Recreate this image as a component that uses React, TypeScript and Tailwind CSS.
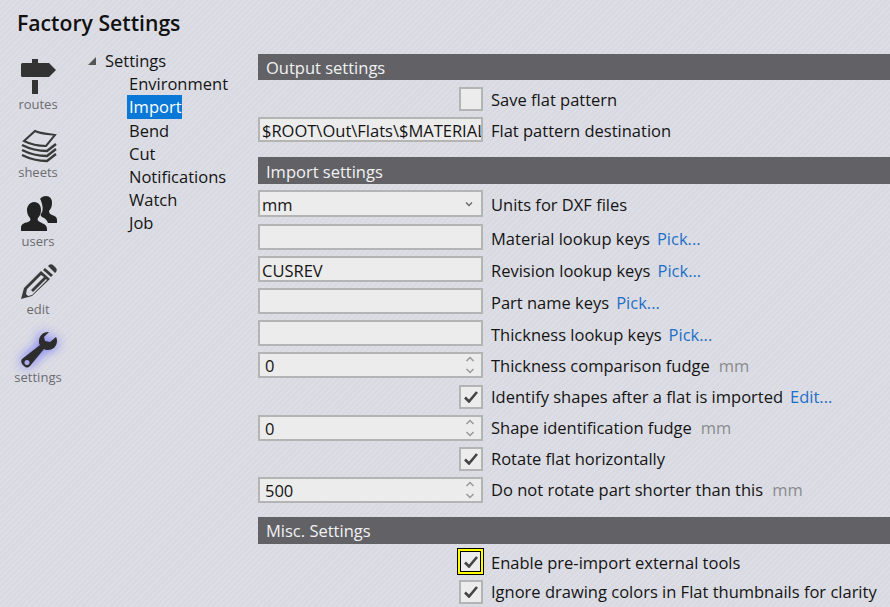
import React from "react";

const font = "font-['Open_Sans','Noto_Sans',sans-serif]";

function Signpost() {
  return (
    <svg width="36" height="36" viewBox="0 0 36 36" fill="#333333">
      <path d="M11 0h6v4h11l7 7-7 7H1.5A1.5 1.5 0 0 1 0 16.5v-11A1.5 1.5 0 0 1 1.5 4H11z" />
      <rect x="11" y="21" width="6" height="14" />
    </svg>
  );
}

function Sheets() {
  return (
    <svg width="36" height="36" viewBox="0 0 36 36" fill="none" stroke="#3a3a3a">
      <path d="M3 14 14 4c6 3 14 3 20 4l-9 11C17 19 9 17 3 14z" strokeWidth="2" fill="#dcdde4" />
      <path d="M1 18c8 4 17 6 25 6l9-7" strokeWidth="2.4" />
      <path d="M1 23c8 4 17 6 25 6l9-7" strokeWidth="2.4" />
      <path d="M1 28c8 4 17 6 25 6l9-7" strokeWidth="2.4" />
    </svg>
  );
}

function Users() {
  return (
    <svg width="36" height="36" viewBox="0 0 36 36" fill="#222222">
      <path d="M25 0c4 0 6 3 6 7 0 3-1 6-3 8 0 2 1 3 3 4 3 1 5 2 5 5v3H27c-1-3-3-5-6-6-1-1-2-2-1-3 2-3 2-6 1-10-1-3-1-4-2-5 1-2 4-3 6-3z" />
      <path d="M13 6c5 0 7 4 7 8 0 3-1 6-3 8-1 2 0 3 2 4 4 2 7 3 7 7v2H0v-3c0-4 3-5 7-6 2-1 3-2 2-4-2-2-3-5-3-8 0-4 3-8 7-8z" />
    </svg>
  );
}

function Pencil() {
  return (
    <svg width="36" height="36" viewBox="0 0 36 36" fill="#3a3a3a">
      <path d="M28 1c1-1 3-1 4 0l3 3c1 1 1 3 0 4l-1 1-7-7z" />
      <path d="M24 4l8 7-2 2-8-7z" />
      <path fillRule="evenodd" d="M20 7l9 8-18 17-11 3 3-11zM20 11 6 25l-1 5 2 2 4-1 15-15-1-1-13 13-2-2 13-13z" />
    </svg>
  );
}

function Wrench() {
  return (
    <svg width="36" height="36" viewBox="0 0 36 36" fill="#2d2d2d">
      <path
        fillRule="evenodd"
        d="M27 0c-5 0-9 4-9 9 0 2 0 3 1 4L1 27c-1 1-1 3 0 5l2 2c2 2 4 2 6 0L23 17c1 1 3 1 4 1 5 0 9-4 9-9 0-1 0-2-1-4l-6 5-5-1-1-4 5-5zM6 28a2.5 2.5 0 1 1 0 5 2.5 2.5 0 0 1 0-5z"
      />
    </svg>
  );
}

function NavItem({ icon, label, glow }: { icon: React.ReactNode; label: string; glow?: boolean }) {
  return (
    <div className="h-[68.25px] flex flex-col items-center">
      <div className={glow ? "h-9 drop-shadow-[0_0_6px_#5c5cff]" : "h-9"}>{icon}</div>
      <span className="text-[13px] leading-[18px] mr-[2px] text-[#6b6b70]">{label}</span>
    </div>
  );
}

function SectionHeader({ title, className }: { title: string; className?: string }) {
  return (
    <div className={"bg-[#616166] text-[#f2f2f4] text-[16.5px] leading-[28px] pl-2 " + (className ?? "h-[27px]")}>
      {title}
    </div>
  );
}

function Check({ checked, className }: { checked: boolean; className?: string }) {
  return (
    <div className={"flex items-center justify-center bg-[#ececec] " + (className ?? "w-6 h-6 border-2 border-[#b4b4b4]")}>
      {checked && (
        <svg width="14" height="12" viewBox="0 0 14 12" fill="none" stroke="#444444" strokeWidth="2.6">
          <path d="M1 6.5 5 10.5 13 1" />
        </svg>
      )}
    </div>
  );
}

function Row({ left, children, className, labelClass }: { left: React.ReactNode; children: React.ReactNode; className?: string; labelClass?: string }) {
  return (
    <div className={"flex items-center " + (className ?? "")}>
      <div className="w-[225px] shrink-0 flex justify-end">{left}</div>
      <div className={"ml-2 whitespace-nowrap text-[16.5px] leading-[20px] text-[#141414] " + (labelClass ?? "")}>{children}</div>
    </div>
  );
}

function Input({ value, className }: { value?: string; className?: string }) {
  return (
    <div className={"w-[225px] border-2 border-[#b4b4b4] bg-[#ececec] text-[16.5px] leading-[20px] text-[#141414] pl-[2px] pt-[3px] overflow-hidden whitespace-nowrap flex items-center " + (className ?? "h-[26px]")}>
      {value}
    </div>
  );
}

function Spinner({ value }: { value: string }) {
  return (
    <div className="w-[225px] h-[26px] border-2 border-[#b4b4b4] bg-[#ececec] text-[16.5px] leading-[20px] text-[#141414] pl-[5px] flex items-center justify-between pr-[6px]">
      <span className="pt-[1px]">{value}</span>
      <svg width="10" height="20" viewBox="0 0 10 20" fill="none" stroke="#9a9a9a" strokeWidth="1.5">
        <path d="M1.5 6 5 2.5 8.5 6" />
        <path d="M1.5 14 5 17.5 8.5 14" />
      </svg>
    </div>
  );
}

function Pick({ children }: { children: React.ReactNode }) {
  return <span className="text-[#1e6fc8] ml-[7px]">{children}</span>;
}

function Unit({ children }: { children: React.ReactNode }) {
  return <span className="text-[#8a8a8e] ml-[9px]">{children}</span>;
}

const treeItems = ["Environment", "Import", "Bend", "Cut", "Notifications", "Watch", "Job"];

export default function App() {
  return (
    <div
      className={
        "w-[890px] h-[607px] overflow-hidden pl-[17px] pt-[8px] bg-[#dcdde4] bg-[repeating-linear-gradient(135deg,#dddee5_0px,#dddee5_2px,#d9dae1_2px,#d9dae1_4px)] " +
        font
      }
    >
      <h1 className="text-[21.2px] leading-[30px] font-semibold text-[#111111]">Factory Settings</h1>
      <div className="flex">
        <div className="w-[40px] mr-[15px] ml-[2px] shrink-0 mt-[21px] flex flex-col items-center">
          <div className="w-[36px]">
            <NavItem icon={<Signpost />} label="routes" />
            <NavItem icon={<Sheets />} label="sheets" />
            <NavItem icon={<Users />} label="users" />
            <NavItem icon={<Pencil />} label="edit" />
            <NavItem icon={<Wrench />} label="settings" glow />
          </div>
        </div>
        <div className="w-[184px] shrink-0 mt-[11px] text-[16.5px] leading-[23.2px] text-[#141414]">
          <div className="flex items-center pl-[14px]">
            <span className="w-0 h-0 mr-[9px] border-l-[8px] border-l-transparent border-b-[8px] border-b-[#555555]" />
            Settings
          </div>
          {treeItems.map((t) => (
            <div key={t} className="pl-[55px]">
              <span className={t === "Import" ? "inline-block bg-[#0a78d7] text-white pl-[2px] -ml-[2px]" : ""}>{t}</span>
            </div>
          ))}
        </div>
        <div className="w-[632px] shrink-0 mt-[16px]">
          <SectionHeader title="Output settings" className="h-[26px]" />
          <Row className="mt-[7px]" labelClass="pt-[2px]" left={<Check checked={false} />}>Save flat pattern</Row>
          <Row className="mt-[6px]" labelClass="pt-[2px]" left={<Input value="$ROOT\Out\Flats\$MATERIAL" className="h-[25px]" />}>Flat pattern destination</Row>
          <SectionHeader title="Import settings" className="mt-[15px] h-[27px] leading-[29px]" />
          <Row
            className="mt-[6px]"
            labelClass="pt-[2px]"
            left={
              <div className="w-[225px] h-[27px] border-2 border-[#b4b4b4] bg-[#ececec] text-[16.5px] leading-[20px] text-[#141414] pl-[2px] pr-[8px] flex items-center justify-between">
                <span className="pt-[2px]">mm</span>
                <svg width="8" height="6" viewBox="0 0 8 6" fill="none" stroke="#666666" strokeWidth="1.3">
                  <path d="M1 1.5 4 4.5 7 1.5" />
                </svg>
              </div>
            }
          >
            Units for DXF files
          </Row>
          <Row className="mt-[7px]" labelClass="pt-[4px]" left={<Input />}>Material lookup keys<Pick>Pick...</Pick></Row>
          <Row className="mt-[6px]" labelClass="pt-[4px]" left={<Input value="CUSREV" />}>Revision lookup keys<Pick>Pick...</Pick></Row>
          <Row className="mt-[6px]" labelClass="pt-[4px]" left={<Input />}>Part name keys<Pick>Pick...</Pick></Row>
          <Row className="mt-[6px]" labelClass="pt-[4px]" left={<Input />}>Thickness lookup keys<Pick>Pick...</Pick></Row>
          <Row className="mt-[6px]" labelClass="pt-[2px]" left={<Spinner value="0" />}>Thickness comparison fudge<Unit>mm</Unit></Row>
          <Row className="mt-[7px]" left={<Check checked />}>Identify shapes after a flat is imported<Pick>Edit...</Pick></Row>
          <Row className="mt-[6px]" left={<Spinner value="0" />}>Shape identification fudge<Unit>mm</Unit></Row>
          <Row className="mt-[6px]" left={<Check checked />}>Rotate flat horizontally</Row>
          <Row className="mt-[6px]" left={<Spinner value="500" />}>Do not rotate part shorter than this<Unit>mm</Unit></Row>
          <SectionHeader title="Misc. Settings" className="mt-[14px] h-[27px]" />
          <Row
            className="mt-[4px]"
            labelClass="pt-[2px]"
            left={
              <div className="-mr-[1px] w-[27px] h-[27px] border border-black bg-[#ffff00] p-[2px]">
                <Check checked className="w-full h-full border border-black" />
              </div>
            }
          >
            Enable pre-import external tools
          </Row>
          <Row className="mt-[5px]" left={<Check checked />}>Ignore drawing colors in Flat thumbnails for clarity</Row>
        </div>
      </div>
    </div>
  );
}
